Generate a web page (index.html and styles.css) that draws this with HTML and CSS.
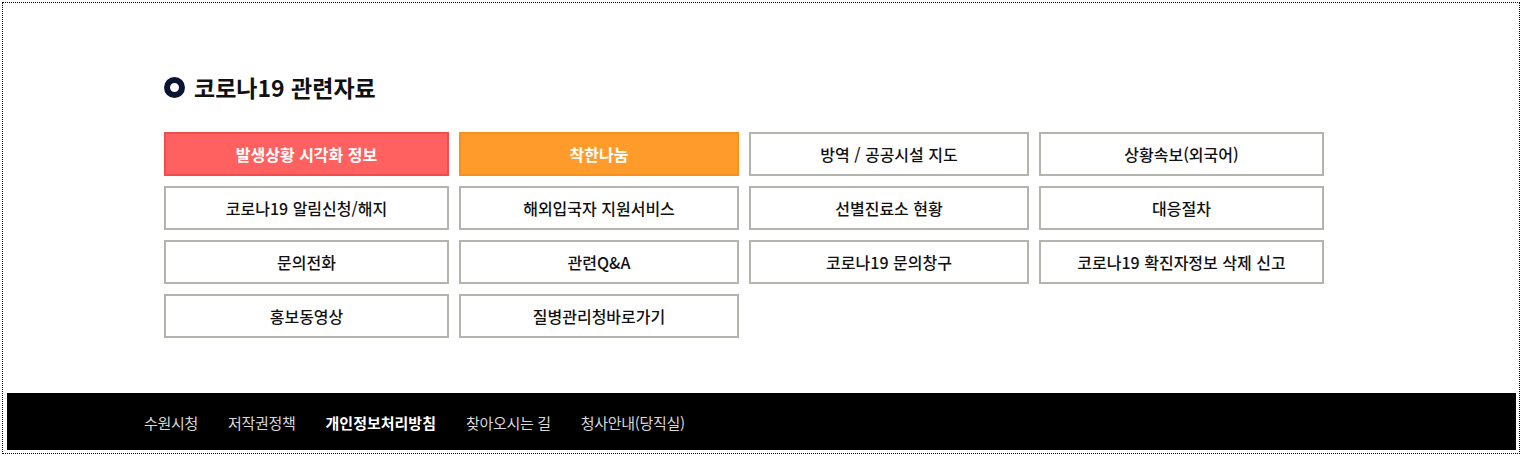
FILE: index.html
```html
<!DOCTYPE html>
<html lang="ko">
<head>
  <meta charset="UTF-8">
  <title>코로나19 관련자료</title>
  <link rel="stylesheet" href="styles.css">
</head>
<body>
  <div class="wrap">
    <section class="corona">
      <h2 class="corona-title"><span class="ring"></span>코로나19 관련자료</h2>
      <ul class="link-grid">
        <li><a class="btn btn-red" href="#">발생상황 시각화 정보</a></li>
        <li><a class="btn btn-orange" href="#">착한나눔</a></li>
        <li><a class="btn" href="#">방역 / 공공시설 지도</a></li>
        <li><a class="btn" href="#">상황속보(외국어)</a></li>
        <li><a class="btn" href="#">코로나19 알림신청/해지</a></li>
        <li><a class="btn" href="#">해외입국자 지원서비스</a></li>
        <li><a class="btn" href="#">선별진료소 현황</a></li>
        <li><a class="btn" href="#">대응절차</a></li>
        <li><a class="btn" href="#">문의전화</a></li>
        <li><a class="btn" href="#">관련Q&amp;A</a></li>
        <li><a class="btn" href="#">코로나19 문의창구</a></li>
        <li><a class="btn" href="#">코로나19 확진자정보 삭제 신고</a></li>
        <li><a class="btn" href="#">홍보동영상</a></li>
        <li><a class="btn" href="#">질병관리청바로가기</a></li>
      </ul>
    </section>

    <footer class="footer">
      <ul class="footer-menu">
        <li><a href="#">수원시청</a></li>
        <li><a href="#">저작권정책</a></li>
        <li><a class="strong" href="#">개인정보처리방침</a></li>
        <li><a href="#">찾아오시는 길</a></li>
        <li><a href="#">청사안내(당직실)</a></li>
      </ul>
    </footer>
  </div>
</body>
</html>
```

FILE: styles.css
```css
* {
  box-sizing: border-box;
}
body {
  margin: 0;
  font-family: "Noto Sans CJK KR", "Noto Sans", sans-serif;
  color: #111;
  background: #fff;
}
ul {
  list-style: none;
  margin: 0;
  padding: 0;
}
a {
  text-decoration: none;
  color: inherit;
}
.wrap {
  margin: 2px;
  border: 1px dotted #000;
  padding: 4px 3px 2px 4px;
  height: 452px;
}
.corona {
  padding: 66px 0 55px 157px;
  width: 1317px;
}
.corona-title {
  display: flex;
  align-items: center;
  margin: 0 0 31px;
  font-size: 23px;
  line-height: 28px;
  font-weight: 700;
  color: #111;
}
.ring {
  width: 21px;
  height: 21px;
  border-radius: 50%;
  border: 6px solid #0b1433;
  margin-right: 9px;
}
.link-grid {
  display: grid;
  grid-template-columns: 285px 280px 280px 285px;
  gap: 10px;
}
.btn {
  display: flex;
  align-items: center;
  justify-content: center;
  height: 44px;
  border: 2px solid #b4b4ae;
  font-size: 16px;
  font-weight: 500;
  color: #111;
  background: #fff;
}
.btn-red {
  background: #ff6060;
  border-color: #f24c4c;
  color: #fff;
  font-weight: 700;
}
.btn-orange {
  background: #ff9b2b;
  border-color: #f8911c;
  color: #fff;
  font-weight: 700;
}
.footer {
  background: #000;
  height: 57px;
  display: flex;
  align-items: center;
  padding-left: 137px;
}
.footer-menu {
  display: flex;
  gap: 30px;
}
.footer-menu a {
  font-size: 15px;
  letter-spacing: -0.3px;
  color: #d8d8d8;
}
.footer-menu a.strong {
  color: #fff;
  font-weight: 700;
  letter-spacing: 0;
}
```
